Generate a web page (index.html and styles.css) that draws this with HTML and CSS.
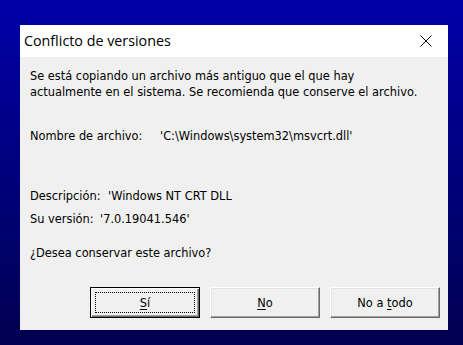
FILE: index.html
```html
<!DOCTYPE html>
<html lang="es">
<head>
    <meta charset="UTF-8">
    <title>Conflicto de versiones</title>
    <link rel="stylesheet" href="styles.css">
</head>
<body>
    <div class="dialog">
        <div class="dialog-title">
            <span class="title-text">Conflicto de versiones</span>
            <span class="close-button">
                <svg width="12" height="12" viewBox="0 0 12 12">
                    <path d="M0.5 0.5 L11.5 11.5 M11.5 0.5 L0.5 11.5" stroke="#000" stroke-width="1" fill="none"/>
                </svg>
            </span>
        </div>

        <div class="dialog-body">
            <p class="intro">Se está copiando un archivo más antiguo que el que hay<br>actualmente en el sistema. Se recomienda que conserve el archivo.</p>

            <div class="field field-name">
                <span class="field-label">Nombre de archivo:</span>
                <span class="field-value">'C:\Windows\system32\msvcrt.dll'</span>
            </div>

            <div class="field field-desc">
                <span class="field-label">Descripción:</span>
                <span class="field-value">'Windows NT CRT DLL</span>
            </div>

            <div class="field field-version">
                <span class="field-label">Su versión:</span>
                <span class="field-value">'7.0.19041.546'</span>
            </div>

            <p class="question">¿Desea conservar este archivo?</p>

            <div class="button-row">
                <button class="dlg-button default"><span class="focus-ring"><span><u>S</u>í</span></span></button>
                <button class="dlg-button"><span><u>N</u>o</span></button>
                <button class="dlg-button"><span>No a <u>t</u>odo</span></button>
            </div>
        </div>
    </div>
</body>
</html>
```

FILE: styles.css
```css
* {
    margin: 0;
    padding: 0;
    box-sizing: border-box;
}

body {
    width: 463px;
    height: 345px;
    overflow: hidden;
    background: linear-gradient(180deg, #0000a8 0%, #00007c 50%, #000050 100%);
    font-family: 'DejaVu Sans', Tahoma, sans-serif;
    padding: 25px 0 0 20px;
}

.dialog {
    width: 428px;
    height: 305px;
    background: #f0f0f0;
    display: flex;
    flex-direction: column;
}

.dialog-title {
    height: 32px;
    background: #ffffff;
    display: flex;
    align-items: center;
    justify-content: space-between;
    padding: 0 16px 1px 4px;
}

.title-text {
    font-family: 'Open Sans', 'Noto Sans', sans-serif;
    font-size: 14.3px;
    color: #000;
}

.close-button {
    display: flex;
    width: 12px;
    height: 12px;
}

.dialog-body {
    flex: 1;
    padding: 11px 8px 0 10px;
    font-size: 11.4px;
    line-height: 16px;
    color: #000;
}

.field {
    display: flex;
    height: 16px;
    white-space: nowrap;
}

.field-name {
    margin-top: 28px;
}

.field-name .field-label {
    width: 130px;
}

.field-desc {
    margin-top: 44px;
}

.field-desc .field-label {
    width: 78px;
}

.field-version {
    margin-top: 7px;
}

.field-version .field-label {
    width: 70px;
}

.question {
    margin-top: 18px;
}

.button-row {
    margin-top: 26px;
    display: flex;
    justify-content: flex-end;
    gap: 10px;
}

.dlg-button {
    width: 110px;
    height: 31px;
    background: #f0f0f0;
    font-family: 'DejaVu Sans', Tahoma, sans-serif;
    font-size: 11.4px;
    color: #000;
    border: 1px solid;
    border-color: #ffffff #696969 #696969 #ffffff;
    box-shadow: inset -1px -1px 0 #a0a0a0, inset 1px 1px 0 #e3e3e3;
    display: flex;
    align-items: center;
    justify-content: center;
}

.dlg-button.default {
    border: 1px solid #000;
    box-shadow: inset 1px 1px 0 #ffffff, inset -1px -1px 0 #696969, inset -2px -2px 0 #a0a0a0;
    padding: 4px;
}

.focus-ring {
    flex: 1;
    align-self: stretch;
    display: flex;
    align-items: center;
    justify-content: center;
    border: 1px dotted #000;
}

u {
    text-underline-offset: 2px;
}
```
